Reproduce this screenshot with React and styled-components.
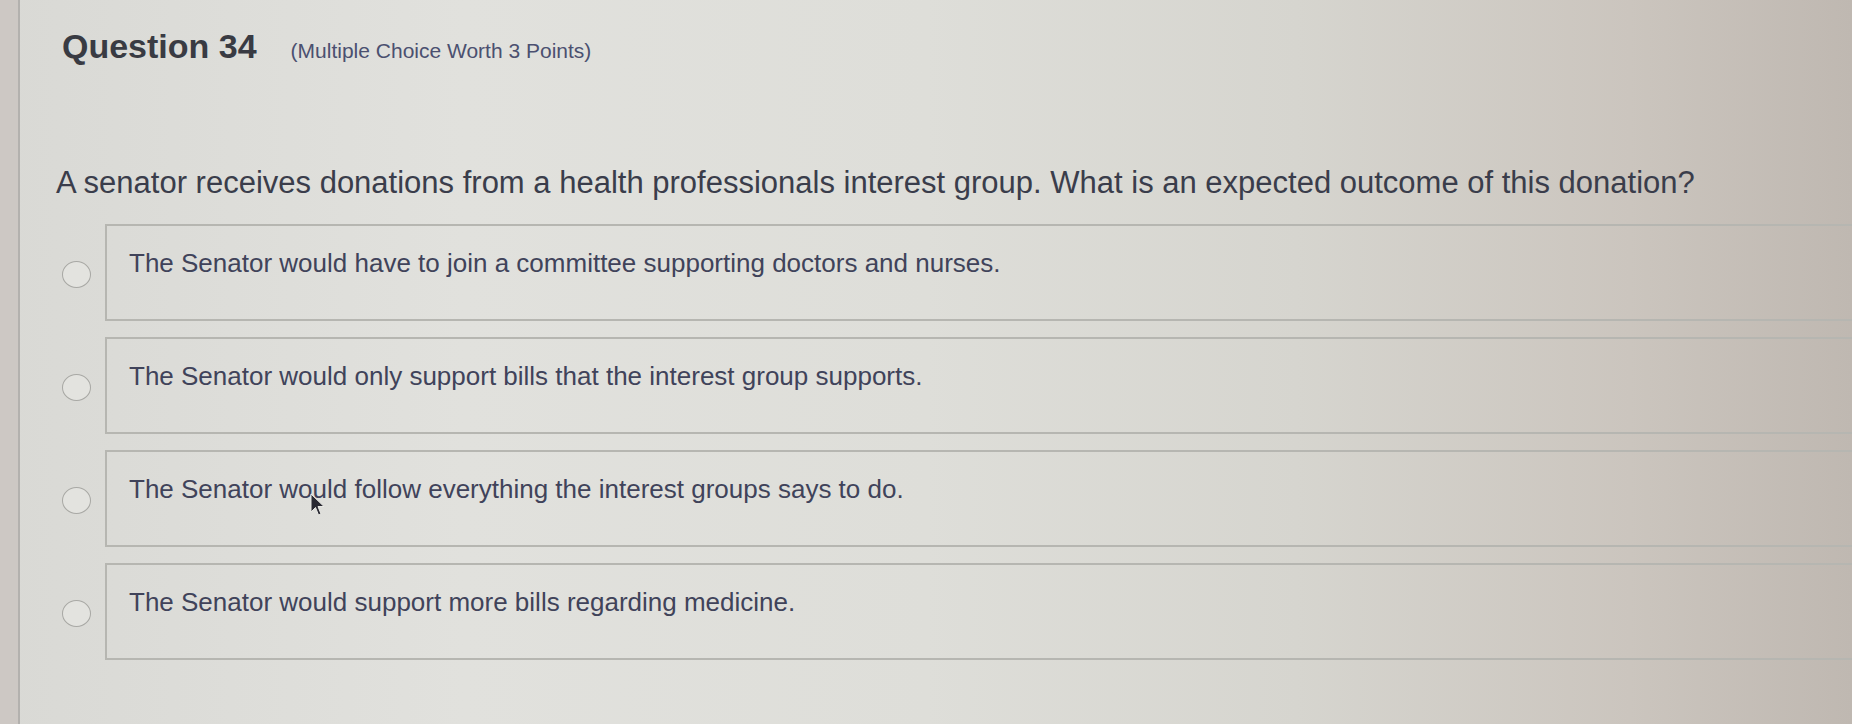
import React from 'react';
import styled, { createGlobalStyle } from 'styled-components';

const GlobalStyle = createGlobalStyle`
  html, body {
    margin: 0;
    padding: 0;
  }
  body {
    font-family: "Liberation Sans", Arial, sans-serif;
    overflow: hidden;
  }
  *, *::before, *::after {
    box-sizing: border-box;
  }
`;

const Page = styled.div`
  display: flex;
  width: 1852px;
  height: 724px;
  background: linear-gradient(
    to right,
    #d9d9d5 0%,
    #e1e1dd 25%,
    #deded9 50%,
    #d6d5cf 70%,
    #cbc5be 88%,
    #bfb8b1 100%
  );
  position: relative;
  overflow: hidden;
`;

const Gutter = styled.div`
  width: 20px;
  flex-shrink: 0;
  background: #cdc8c4;
  border-right: 2px solid #b3b1ae;
`;

const Main = styled.div`
  flex: 1;
  padding: 28px 0 0 42px;
  min-width: 0;
`;

const Header = styled.div`
  display: flex;
  align-items: baseline;
  gap: 34px;
`;

const Title = styled.h1`
  margin: 0;
  font-size: 34px;
  line-height: 37px;
  font-weight: 700;
  color: #393b43;
`;

const Meta = styled.span`
  font-size: 21px;
  color: #4b5070;
`;

const Prompt = styled.p`
  margin: 100px 0 0 -6px;
  font-size: 31px;
  line-height: 36px;
  color: #3a3d4b;
  white-space: nowrap;
`;

const Options = styled.div`
  display: flex;
  flex-direction: column;
  gap: 16px;
  margin-top: 23px;
`;

const Option = styled.label`
  display: flex;
  align-items: center;
  gap: 14px;
  cursor: pointer;
`;

const Radio = styled.span`
  width: 29px;
  height: 27px;
  flex-shrink: 0;
  border-radius: 50%;
  border: 1.5px solid #a8a8a4;
  background: #e3e3df;
  margin-top: 4px;
`;

const Box = styled.div`
  flex: 1;
  height: 97px;
  border: 2px solid #b6b6b1;
  border-right: none;
  padding: 22px 0 0 22px;
  font-size: 26px;
  line-height: 30px;
  color: #40435a;
  white-space: nowrap;
`;

const Pointer = styled.svg`
  position: absolute;
  left: 310px;
  top: 493px;
  width: 15px;
  height: 24px;
`;

const answers = [
  'The Senator would have to join a committee supporting doctors and nurses.',
  'The Senator would only support bills that the interest group supports.',
  'The Senator would follow everything the interest groups says to do.',
  'The Senator would support more bills regarding medicine.',
];

export default function App() {
  return (
    <>
      <GlobalStyle />
      <Page>
        <Gutter />
        <Main>
          <Header>
            <Title>Question 34</Title>
            <Meta>(Multiple Choice Worth 3 Points)</Meta>
          </Header>
          <Prompt>
            A senator receives donations from a health professionals interest group. What is an expected outcome of this donation?
          </Prompt>
          <Options>
            {answers.map((a) => (
              <Option key={a}>
                <Radio />
                <Box>{a}</Box>
              </Option>
            ))}
          </Options>
        </Main>
        <Pointer viewBox="0 0 15 24">
          <path d="M1 1 L1 19 L5.5 14.5 L8.5 22 L11 21 L8 13.5 L14 13.5 Z" fill="#2a2a33" stroke="#e8e8e4" strokeWidth="1" />
        </Pointer>
      </Page>
    </>
  );
}
